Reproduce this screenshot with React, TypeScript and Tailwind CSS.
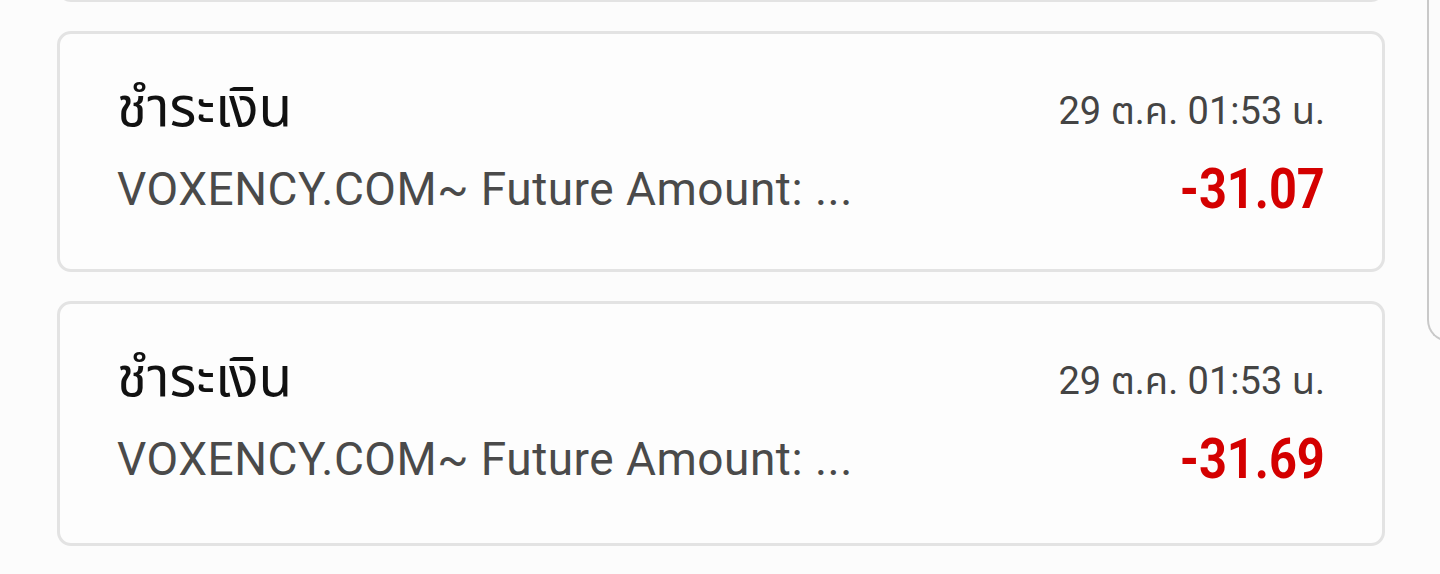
import React from "react";

const items = [
  { title: "ชำระเงิน", desc: "VOXENCY.COM~ Future Amount: ...", date: "29 ต.ค. 01:53 น.", amount: "-31.07", h: "h-[241px]" },
  { title: "ชำระเงิน", desc: "VOXENCY.COM~ Future Amount: ...", date: "29 ต.ค. 01:53 น.", amount: "-31.69", h: "h-[245px]" },
];

const font = { fontFamily: '"Roboto", "Noto Sans Thai", "Noto Sans", "Loma", "Garuda", sans-serif' };

export default function App() {
  return (
    <div className="relative w-[1440px] h-[574px] overflow-hidden bg-[#fcfcfc]" style={font}>
      <div className="flex flex-col gap-[29px] pl-[57px] pr-[55px] -mt-[240px]">
        <div className="h-[242px] rounded-[14px] border-[3px] border-[#e3e3e3] bg-[#fdfdfd]" />
        {items.map((it, i) => (
          <div
            key={i}
            className={`${it.h} rounded-[14px] border-[3px] border-[#e3e3e3] bg-[#fdfdfd] pl-[57px] pr-[57px] pt-[44px] flex flex-col`}
          >
            <div className="flex items-start justify-between h-[62px]">
              <div className="text-[55px] leading-[62px] text-[#111111] -mt-[2px]">{it.title}</div>
              <div className="text-[38px] leading-[62px] text-[#444444] mt-[2px]">{it.date}</div>
            </div>
            <div className="flex items-center justify-between mt-[19px]">
              <div className="text-[46px] leading-[60px] text-[#4a4a4a] tracking-[0.5px]">{it.desc}</div>
              <div className="text-[56px] leading-[60px] font-bold text-[#d40000] scale-x-[0.87] origin-right">{it.amount}</div>
            </div>
          </div>
        ))}
      </div>
      <div className="absolute left-[1427px] -top-[10px] w-[30px] h-[352px] border-l-[2px] border-b-[2px] border-[#c9c9c9] rounded-bl-[22px] bg-[#fbfbfb]" />
    </div>
  );
}
